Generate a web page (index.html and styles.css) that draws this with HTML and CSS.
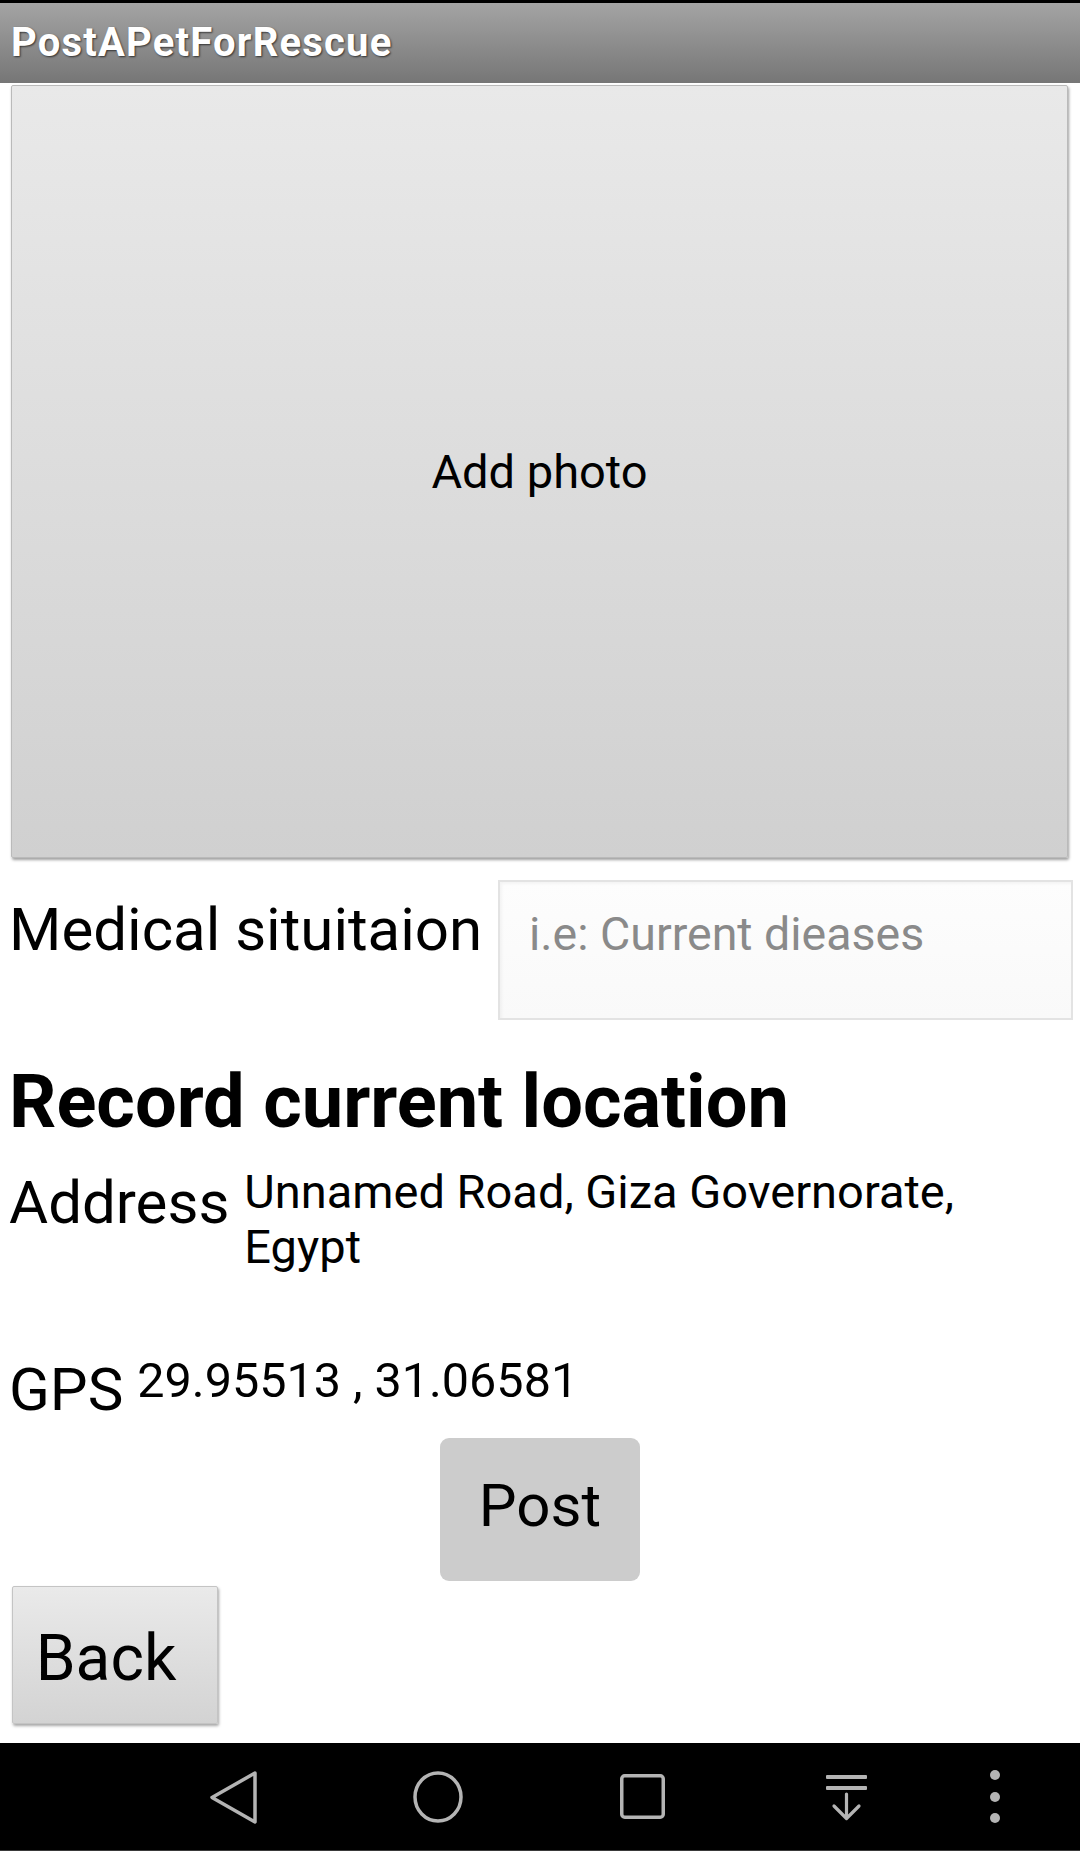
FILE: index.html
```html
<!DOCTYPE html>
<html lang="en">
<head>
<meta charset="utf-8">
<title>PostAPetForRescue</title>
<link rel="stylesheet" href="styles.css">
</head>
<body>
<div class="screen">
  <div class="statusline"></div>
  <header class="appbar">
    <h1 class="apptitle">PostAPetForRescue</h1>
  </header>
  <main class="content">
    <button class="photo-btn" type="button">Add photo</button>

    <div class="medical-row">
      <span class="medical-label">Medical situitaion</span>
      <div class="textbox"><span class="placeholder">i.e: Current dieases</span></div>
    </div>

    <h2 class="section-title">Record current location</h2>

    <div class="info-row address-row">
      <span class="info-label address-label">Address</span>
      <span class="info-value address-value">Unnamed Road, Giza Governorate, Egypt</span>
    </div>

    <div class="info-row gps-row">
      <span class="info-label gps-label">GPS</span>
      <span class="info-value gps-value">29.95513 , 31.06581</span>
    </div>

    <div class="post-wrap">
      <button class="post-btn" type="button">Post</button>
    </div>

    <button class="back-btn" type="button">Back</button>
  </main>

  <nav class="navbar">
    <div class="nav-slot">
      <svg class="nav-icon" viewBox="0 0 60 60" width="60" height="60"><polygon points="51,6 8,30.5 51,55" fill="none" stroke="#b4b4b4" stroke-width="3.5" stroke-linejoin="round"/></svg>
    </div>
    <div class="nav-slot">
      <svg class="nav-icon" viewBox="0 0 60 60" width="60" height="60"><ellipse cx="30" cy="30" rx="23" ry="24" fill="none" stroke="#b4b4b4" stroke-width="3.5"/></svg>
    </div>
    <div class="nav-slot">
      <svg class="nav-icon" viewBox="0 0 60 60" width="60" height="60"><rect x="9.75" y="8.75" width="41.5" height="41.5" rx="3" fill="none" stroke="#b4b4b4" stroke-width="3.5"/></svg>
    </div>
    <div class="nav-slot">
      <svg class="nav-icon" viewBox="0 0 60 60" width="60" height="60"><rect x="10" y="8" width="41" height="4" rx="1" fill="#b4b4b4"/><rect x="10" y="19" width="41" height="4" rx="1" fill="#b4b4b4"/><path d="M30.5 27 V51 M18 39 L30.5 51.5 L43 39" fill="none" stroke="#b4b4b4" stroke-width="3.2" stroke-linecap="round" stroke-linejoin="round"/></svg>
    </div>
    <div class="nav-slot nav-slot-narrow">
      <svg class="nav-icon" viewBox="0 0 60 60" width="60" height="60"><circle cx="30" cy="8" r="5" fill="#b4b4b4"/><circle cx="30" cy="30" r="5" fill="#b4b4b4"/><circle cx="30" cy="51" r="5" fill="#b4b4b4"/></svg>
    </div>
  </nav>
</div>
</body>
</html>
```

FILE: styles.css
```css
* {
  box-sizing: border-box;
}

html, body {
  margin: 0;
  padding: 0;
  background: #ffffff;
}

body {
  font-family: Roboto, "Noto Sans", "Liberation Sans", sans-serif;
  color: #000;
}

.screen {
  width: 1080px;
  height: 1851px;
  display: flex;
  flex-direction: column;
  overflow: hidden;
  background: #fff;
}

.statusline {
  height: 3px;
  background: #000;
  flex: none;
}

.appbar {
  height: 80px;
  flex: none;
  display: flex;
  align-items: center;
  padding-left: 11px;
  background: linear-gradient(#a4a4a4, #767676);
}

.apptitle {
  margin: 0;
  font-family: Roboto, "Liberation Sans", sans-serif;
  font-weight: 700;
  font-size: 40px;
  letter-spacing: 1.2px;
  line-height: 1;
  color: #fff;
  text-shadow: 1px 1px 2px rgba(0, 0, 0, 0.65);
}

.content {
  flex: 1;
  display: flex;
  flex-direction: column;
  align-items: flex-start;
}

button {
  font-family: Roboto, "Liberation Sans", sans-serif;
  color: #000;
  cursor: pointer;
}

.photo-btn {
  margin: 2px 0 0 11px;
  width: 1057px;
  height: 773px;
  border: 1px solid #bababa;
  border-radius: 2px;
  background: linear-gradient(#e9e9e9, #d0d0d0);
  box-shadow: 1px 2px 3px rgba(0, 0, 0, 0.38);
  font-size: 47px;
  padding: 0;
}

.medical-row {
  margin-top: 22px;
  width: 100%;
  display: flex;
  align-items: flex-start;
}

.medical-label {
  margin: 14px 0 0 9px;
  font-size: 60px;
  line-height: normal;
  white-space: nowrap;
}

.textbox {
  margin-left: auto;
  margin-right: 7px;
  width: 575px;
  height: 140px;
  border: 2px solid #e3e3e3;
  background: linear-gradient(#fdfdfd, #f9f9f9);
  box-shadow: inset 2px 2px 3px rgba(0, 0, 0, 0.04);
  padding: 25px 0 0 29px;
}

.placeholder {
  font-size: 46.5px;
  line-height: normal;
  color: #8a8a8a;
  white-space: nowrap;
}

.section-title {
  margin: 38px 0 0 9px;
  font-size: 74px;
  font-weight: 700;
  line-height: normal;
}

.info-row {
  display: flex;
  align-items: flex-start;
  padding-left: 9px;
}

.address-row {
  margin-top: 19px;
  gap: 15px;
}

.gps-row {
  margin-top: 78px;
  gap: 14px;
}

.info-label {
  font-size: 60px;
  line-height: normal;
  white-space: nowrap;
}

.address-label {
  margin-top: 3px;
}

.gps-label {
  margin-top: 2px;
}

.info-value {
  font-size: 47px;
  line-height: normal;
}

.address-value {
  max-width: 760px;
}

.gps-value {
  font-size: 48.5px;
}

.post-wrap {
  width: 100%;
  display: flex;
  justify-content: center;
  margin-top: 13px;
}

.post-btn {
  width: 200px;
  height: 143px;
  border: none;
  border-radius: 9px;
  background: #cccccc;
  font-size: 60px;
  padding: 0 0 8px 0;
}

.back-btn {
  margin: 5px 0 0 12px;
  width: 206px;
  height: 138px;
  border: 1px solid #c4c4c4;
  border-radius: 2px;
  background: linear-gradient(#eaeaea, #d3d3d3);
  box-shadow: 1px 2px 3px rgba(0, 0, 0, 0.35);
  font-size: 64px;
  padding: 6px 18px 0 0;
}

.navbar {
  flex: none;
  height: 108px;
  background: #000;
  display: flex;
  align-items: center;
  padding-left: 132px;
  border-bottom: 1px solid #3a3a3a;
}

.nav-slot {
  width: 204px;
  display: flex;
  justify-content: center;
  align-items: center;
}

.nav-slot-narrow {
  width: 94px;
}

.nav-icon {
  display: block;
}
```
